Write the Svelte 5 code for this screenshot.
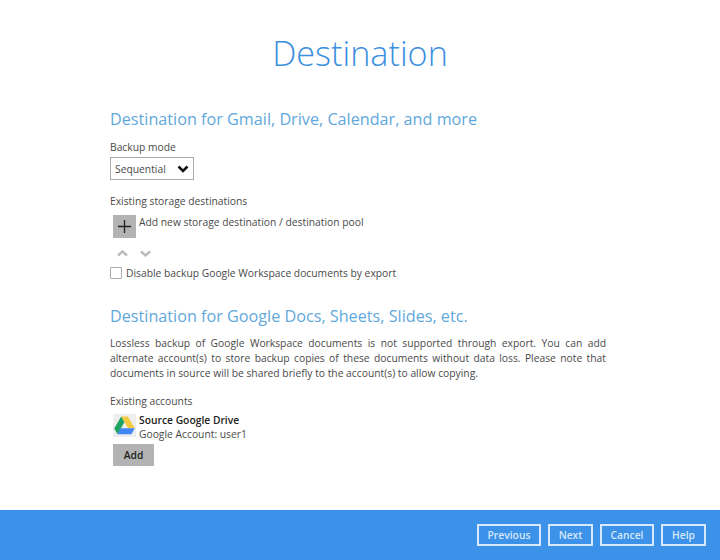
<script>
    const buttons = [
        { text: "Previous", cls: "w64" },
        { text: "Next", cls: "w45" },
        { text: "Cancel", cls: "w54" },
        { text: "Help", cls: "w45" }
    ];
</script>

<div class="page">
    <main class="content">
        <h1>Destination</h1>

        <section class="first">
            <h2>Destination for Gmail, Drive, Calendar, and more</h2>
            <div class="label">Backup mode</div>
            <div class="select">
                <span>Sequential</span>
                <svg width="12" height="8" viewBox="0 0 12 8">
                    <path d="M1.5 1.5 L6 6 L10.5 1.5" fill="none" stroke="#111" stroke-width="2.6" />
                </svg>
            </div>

            <div class="label existing">Existing storage destinations</div>
            <div class="add-row">
                <div class="plus">
                    <svg width="13" height="13" viewBox="0 0 13 13">
                        <path d="M6.5 0 V13 M0 6.5 H13" stroke="#222" stroke-width="1.3" />
                    </svg>
                </div>
                <span>Add new storage destination / destination pool</span>
            </div>
            <div class="arrows">
                <svg width="11" height="7" viewBox="0 0 11 7">
                    <path d="M1 5.5 L5.5 1.5 L10 5.5" fill="none" stroke="#bbb" stroke-width="2.4" />
                </svg>
                <svg width="11" height="7" viewBox="0 0 11 7">
                    <path d="M1 1.5 L5.5 5.5 L10 1.5" fill="none" stroke="#bbb" stroke-width="2.4" />
                </svg>
            </div>
            <div class="check-row">
                <span class="box"></span>
                <span>Disable backup Google Workspace documents by export</span>
            </div>
        </section>

        <section class="second">
            <h2>Destination for Google Docs, Sheets, Slides, etc.</h2>
            <p>Lossless backup of Google Workspace documents is not supported through export. You can add alternate account(s) to store backup copies of these documents without data loss. Please note that documents in source will be shared briefly to the account(s) to allow copying.</p>
            <div class="label accounts">Existing accounts</div>
            <div class="account">
                <div class="drive">
                    <svg width="21" height="19" viewBox="0 0 20 18">
                        <path d="M6.8 0.5 H13.2 L19.8 11.6 H13.4 Z" fill="#f7c93e" />
                        <path d="M6.8 0.5 L9.9 6 L3.4 17.4 L0.2 11.8 Z" fill="#1fa463" />
                        <path d="M6.2 11.6 H19.8 L16.6 17.4 H3.4 Z" fill="#4285f4" />
                    </svg>
                </div>
                <div class="account-text">
                    <strong>Source Google Drive</strong>
                    <span>Google Account: user1</span>
                </div>
            </div>
            <button class="add">Add</button>
        </section>
    </main>

    <footer>
        {#each buttons as b}
            <button class="nav {b.cls}">{b.text}</button>
        {/each}
    </footer>
</div>

<style>
    :global(body) {
        margin: 0;
        background: #fff;
    }
    .page {
        width: 720px;
        height: 560px;
        display: flex;
        flex-direction: column;
        font-family: "Open Sans", sans-serif;
        font-size: 10.3px;
        color: #4a4a4a;
    }
    .content {
        flex: 1;
        padding: 0 114px 0 110px;
    }
    h1 {
        margin: 30px -4px 0 0;
        font-size: 34.2px;
        line-height: 46px;
        font-weight: 300;
        color: #3c8fe0;
        text-align: center;
    }
    h2 {
        margin: 0;
        font-size: 16.2px;
        line-height: 24px;
        font-weight: 400;
        color: #62a8dc;
    }
    .first {
        margin-top: 31px;
    }
    .label {
        margin-top: 8px;
        line-height: 16px;
    }
    .select {
        margin-top: 2px;
        width: 74px;
        height: 21px;
        border: 1px solid #aaa;
        display: flex;
        align-items: center;
        justify-content: space-between;
        padding: 0 4px;
    }
    .existing {
        margin-top: 13px;
    }
    .add-row {
        margin: 6px 0 0 3px;
        display: flex;
        gap: 3px;
        line-height: 15px;
    }
    .plus {
        width: 23px;
        height: 23px;
        background: #b3b3b3;
        display: flex;
        align-items: center;
        justify-content: center;
    }
    .arrows {
        margin: 12px 0 0 7px;
        display: flex;
        gap: 12px;
        height: 7px;
    }
    .check-row {
        margin-top: 8px;
        display: flex;
        align-items: center;
        gap: 4px;
        line-height: 16px;
    }
    .box {
        flex: none;
        width: 10px;
        height: 10px;
        border: 1px solid #aaa;
        border-radius: 1px;
    }
    .second {
        margin-top: 23px;
    }
    p {
        margin: 8px 0 0;
        line-height: 15px;
        text-align: justify;
    }
    .accounts {
        margin-top: 12px;
    }
    .account {
        margin: 5px 0 0 3px;
        display: flex;
        gap: 3px;
    }
    .drive {
        width: 23px;
        height: 23px;
        background: #eee;
        display: flex;
        align-items: center;
        justify-content: center;
    }
    .account-text {
        display: flex;
        flex-direction: column;
        line-height: 13.5px;
    }
    .account-text strong {
        font-weight: 600;
        color: #222;
    }
    .add {
        display: block;
        margin: 3px 0 0 3px;
        width: 41px;
        height: 22px;
        border: none;
        background: #b3b3b3;
        font: 600 10.3px "Open Sans", sans-serif;
        color: #222;
        padding: 0;
    }
    footer {
        height: 50px;
        background: #3b92e8;
        display: flex;
        justify-content: flex-end;
        align-items: center;
        gap: 7px;
        padding-right: 14px;
    }
    .nav {
        height: 22px;
        padding: 0;
        background: transparent;
        border: 2px solid #d6e8f9;
        color: #d6e8f9;
        font: 600 10.3px "Open Sans", sans-serif;
    }
    .w64 { width: 64px; }
    .w45 { width: 45px; }
    .w54 { width: 54px; }
</style>
